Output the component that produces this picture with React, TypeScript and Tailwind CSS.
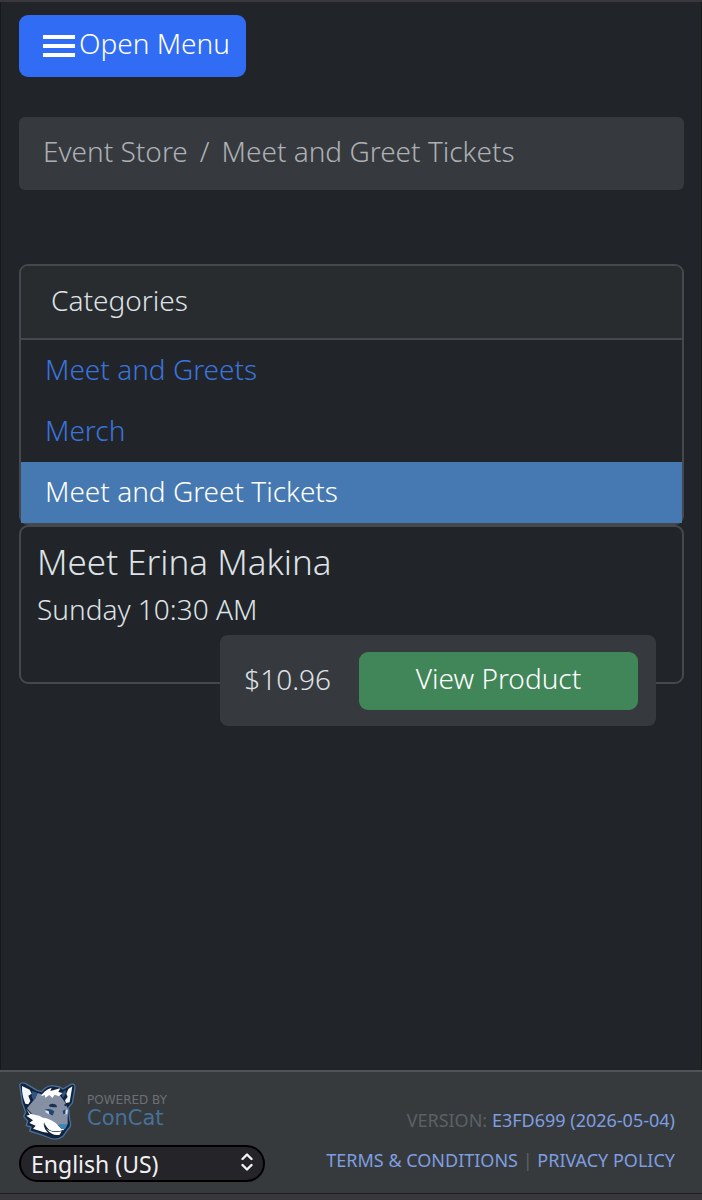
import { useState } from "react";

type Category = {
  id: number;
  label: string;
}

const categories: Category[] = [
  { id: 1, label: 'Meet and Greets' },
  { id: 2, label: 'Merch' },
  { id: 3, label: 'Meet and Greet Tickets' },
];

const FoxLogo = () => (
  <svg viewBox="0 0 198 198" className="w-[66px] h-[66px] shrink-0" aria-hidden="true">
    <path
      d="M14 22 Q20 14 32 20 L66 40 L80 44 Q92 28 110 26 L135 30 L144 36 L168 22 Q180 18 180 32 L172 78 L160 92 L164 128 Q172 148 158 158 L144 178 Q126 192 104 183 L78 173 L44 162 L48 150 L34 146 L38 132 L26 118 L32 106 L22 78 Z"
      fill="#14233c" stroke="#47709b" strokeWidth="4" strokeLinejoin="round"
    />
    <path d="M36 94 L56 70 L68 48 L88 54 L134 54 L150 76 L160 98 L158 122 L158 142 L140 150 L116 138 L90 124 L56 116 Z" fill="#8590a5" />
    <path d="M21 27 L44 38 L50 50 L40 56 L46 72 L40 82 L31 80 Q20 55 21 27 Z" fill="#f5f8fb" />
    <path d="M52 42 L68 48 L62 64 L56 70 L50 60 Z" fill="#315583" />
    <path d="M172 28 L160 36 L154 50 L158 60 L150 70 L153 78 L164 76 Z" fill="#f5f8fb" />
    <path d="M152 38 L138 50 L144 62 L152 50 Z" fill="#315583" />
    <path d="M78 58 Q86 40 110 32 L106 42 L136 34 L130 45 L142 48 L132 58 L119 53 L112 63 L103 54 L91 62 L89 54 Z" fill="#fff" />
    <path d="M34 96 L46 110 L72 116 L92 126 Q84 136 90 150 L103 168 L84 165 L54 155 L62 146 L43 138 L54 130 L34 116 L44 113 Z" fill="#fbfdff" />
    <path d="M84 122 Q104 124 122 138 L140 156 L153 150 L138 168 Q116 170 102 158 Q86 142 84 122 Z" fill="#fff" />
    <path d="M86 138 Q90 154 108 161 Q128 166 146 158 L139 174 Q117 182 102 170 Q86 156 86 138 Z" fill="#14233c" />
    <path d="M94 155 Q114 170 140 163 L134 173 Q112 178 94 155 Z" fill="#fff" />
    <path d="M129 144 Q144 138 157 144 L150 157 L139 155 Z" fill="#3685bd" />
    <path d="M102 84 Q112 76 124 84 L126 91 Q114 91 104 89 Z M148 82 L156 80 L155 87 L149 88 Z" fill="#1d3050" />
    <path d="M90 99 Q102 96 117 104 L114 116 Q100 114 92 106 Z" fill="#d9e4f0" />
    <path d="M88 99 Q103 92 118 103 L114 116 L103 112 L101 102 Z" fill="#24436e" />
    <path d="M144 101 Q151 95 158 99 L156 112 L147 112 Z" fill="#d9e4f0" />
    <path d="M143 101 L152 96 L151 111 L145 112 Z" fill="#24436e" />
  </svg>
)

const App = () => {

  const [active, setActive] = useState(3);
  const [language, setLanguage] = useState('en-US');

  return (
    <div className="min-h-screen flex flex-col bg-[#212529] border-t-2 border-[#39393d] text-[#dee2e6] text-[28px] leading-[39px] font-light font-['Noto_Sans',sans-serif]">
      <main className="flex-1 pl-[18px] pr-[17px] pt-[13px] border-x border-[#17191c]">
        <button className="flex items-center gap-1 h-[62px] pl-6 pr-4 rounded-[9px] bg-[#316cf4] text-white">
          <svg viewBox="0 0 32 22" className="w-8 h-[22px]" fill="none" stroke="currentColor" strokeWidth="4" aria-hidden="true">
            <path d="M0 2h32M0 11h32M0 20h32" />
          </svg>
          <span className="pb-1.5">Open Menu</span>
        </button>

        <nav aria-label="breadcrumb" className="mt-10 h-[73px] px-6 pt-[15px] rounded-md bg-[#363a3e] text-[#adb0b4]">
          <ol className="flex gap-3">
            <li><a href="#store">Event Store</a></li>
            <li aria-hidden="true">/</li>
            <li>Meet and Greet Tickets</li>
          </ol>
        </nav>

        <section className="mt-[74px] border-2 border-[#45494d] rounded-[9px]">
          <h2 className="px-[30px] pt-[15px] pb-[18px] border-b-2 border-[#45494d] bg-[#282c2f] rounded-t-[7px]">Categories</h2>
          <ul>
            {categories.map((item) => (
              <li key={item.id}>
                <a
                  href={'#category-' + item.id}
                  onClick={() => setActive(item.id)}
                  className={item.id === active
                    ? 'block px-6 pt-[10px] pb-3 bg-[#4679b2] text-white'
                    : 'block px-6 pt-[10px] pb-3 text-[#3b73dc]'}
                >{item.label}</a>
              </li>
            ))}
          </ul>
        </section>

        <article className="border-2 border-[#45494d] rounded-[9px] px-4 pt-3 pb-px">
          <h3 className="text-[35px] leading-[46px]">Meet Erina Makina</h3>
          <p className="pt-[5px] pb-px">Sunday 10:30 AM</p>
          <div className="flex justify-end mr-2.5 -mb-[45px] mt-[5px]">
            <div className="relative flex items-center gap-7 h-[91px] pl-6 pr-[18px] rounded-lg bg-[#363a3e]">
              <span className="pb-0.5">$10.96</span>
              <button className="w-[279px] h-[58px] pb-1 rounded-[9px] bg-[#418658] text-white">View Product</button>
            </div>
          </div>
        </article>
      </main>

      <footer className="border-t-2 border-[#505457] bg-[#363a3d] font-normal">
        <div className="flex justify-between pl-[19px] pr-[27px] pt-1.5 pb-[11px]">
          <div>
            <a href="#concat" className="flex items-center -ml-1 h-[65px] font-['DejaVu_Sans',sans-serif]">
              <FoxLogo />
              <span className="flex flex-col pl-1.5">
                <span className="text-[12px] leading-4 text-[#6b7075]">POWERED BY</span>
                <span className="text-[21px] leading-5 text-[#477198]">ConCat</span>
              </span>
            </a>
            <div className="relative w-[246px]">
              <select
                aria-label="Language"
                value={language}
                onChange={e => setLanguage(e.target.value)}
                className="appearance-none w-full h-[37px] pl-2.5 rounded-full border-2 border-black bg-[#252429] text-[23px] leading-8 text-[#f0f0f2] outline-none"
              >
                <option value="en-US">English (US)</option>
              </select>
              <svg viewBox="0 0 12 18" className="absolute right-3 top-[10px] w-3 h-[18px] pointer-events-none" fill="none" stroke="#f4f4f6" strokeWidth="2.4" strokeLinecap="round" strokeLinejoin="round" aria-hidden="true">
                <path d="M1.5 6 6 1.5 10.5 6M1.5 12 6 16.5 10.5 12" />
              </svg>
            </div>
          </div>
          <div className="text-right text-[18px] leading-10 text-[#7f9ee0] pt-[22px]">
            <p><span className="text-[#5c6064]">VERSION:</span> <a href="#version">E3FD699 (2026-05-04)</a></p>
            <p><a href="#terms">TERMS &amp; CONDITIONS</a> <span className="text-[#5c6064]">|</span> <a href="#privacy">PRIVACY POLICY</a></p>
          </div>
        </div>
        <div className="h-[7px] border-t border-[#1e2022] bg-[#38383c]" />
      </footer>
    </div>
  );
}

export default App;
